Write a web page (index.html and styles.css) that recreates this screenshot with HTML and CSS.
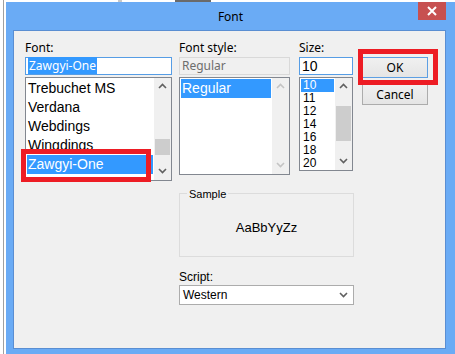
FILE: index.html
```html
<!DOCTYPE html>
<html lang="en">

<head>
    <meta charset="UTF-8">
    <title>Font</title>
    <link rel="stylesheet" href="styles.css">
</head>

<body>
    <div class="desk">
        <div class="desk-edge"></div>

        <div class="window-wrap">
            <div class="desk-top">
                <span class="top-bit light"></span>
                <span class="top-bit dark"></span>
            </div>

            <div class="window">
                <div class="titlebar">
                    <span class="title">Font</span>
                    <button class="close">
                        <svg width="10" height="10" viewBox="0 0 10 10">
                            <path d="M1 1 L9 9 M9 1 L1 9" stroke="#fff" stroke-width="2"/>
                        </svg>
                    </button>
                </div>

                <div class="client">
                    <div class="top-row">
                        <!-- font name -->
                        <div class="col col-font">
                            <div class="lbl">Font:</div>
                            <div class="field focus"><span class="sel-text">Zawgyi-One</span></div>
                            <div class="list list-font">
                                <ul class="items">
                                    <li>Trebuchet MS</li>
                                    <li>Verdana</li>
                                    <li>Webdings</li>
                                    <li>Wingdings</li>
                                    <li class="active">Zawgyi-One</li>
                                </ul>
                                <div class="scroll">
                                    <div class="arrow"><svg width="9" height="6" viewBox="0 0 9 6"><polyline points="1,5 4.5,1.5 8,5" fill="none" stroke="#606060" stroke-width="1.6"/></svg></div>
                                    <div class="track"><div class="thumb thumb-font"></div></div>
                                    <div class="arrow"><svg width="9" height="6" viewBox="0 0 9 6"><polyline points="1,1 4.5,4.5 8,1" fill="none" stroke="#606060" stroke-width="1.6"/></svg></div>
                                </div>
                            </div>
                        </div>

                        <!-- font style -->
                        <div class="col col-style">
                            <div class="lbl">Font style:</div>
                            <div class="field disabled">Regular</div>
                            <div class="list list-style">
                                <ul class="items">
                                    <li class="active">Regular</li>
                                </ul>
                                <div class="scroll">
                                    <div class="arrow"><svg width="9" height="6" viewBox="0 0 9 6"><polyline points="1,5 4.5,1.5 8,5" fill="none" stroke="#c4c4c4" stroke-width="1.6"/></svg></div>
                                    <div class="track"></div>
                                    <div class="arrow"><svg width="9" height="6" viewBox="0 0 9 6"><polyline points="1,1 4.5,4.5 8,1" fill="none" stroke="#c4c4c4" stroke-width="1.6"/></svg></div>
                                </div>
                            </div>
                        </div>

                        <!-- size -->
                        <div class="col col-size">
                            <div class="lbl">Size:</div>
                            <div class="field focus size-field">10</div>
                            <div class="list list-size">
                                <ul class="items">
                                    <li class="active">10</li>
                                    <li>11</li>
                                    <li>12</li>
                                    <li>14</li>
                                    <li>16</li>
                                    <li>18</li>
                                    <li>20</li>
                                </ul>
                                <div class="scroll">
                                    <div class="arrow"><svg width="9" height="6" viewBox="0 0 9 6"><polyline points="1,5 4.5,1.5 8,5" fill="none" stroke="#606060" stroke-width="1.6"/></svg></div>
                                    <div class="track"><div class="thumb thumb-size"></div></div>
                                    <div class="arrow"><svg width="9" height="6" viewBox="0 0 9 6"><polyline points="1,1 4.5,4.5 8,1" fill="none" stroke="#606060" stroke-width="1.6"/></svg></div>
                                </div>
                            </div>
                        </div>

                        <div class="col col-buttons">
                            <button class="btn btn-default">OK</button>
                            <button class="btn">Cancel</button>
                        </div>
                    </div>

                    <div class="lower">
                        <fieldset class="sample">
                            <legend>Sample</legend>
                            <div class="sample-text">AaBbYyZz</div>
                        </fieldset>
                        <div class="lbl-small">Script:</div>
                        <div class="select">
                            <span>Western</span>
                            <svg width="9" height="6" viewBox="0 0 9 6"><polyline points="1,1 4.5,4.5 8,1" fill="none" stroke="#606060" stroke-width="1.6"/></svg>
                        </div>
                    </div>
                </div>
            </div>
        </div>

        <!-- red highlight boxes drawn over the dialog -->
        <div class="mark mark-font"></div>
        <div class="mark mark-ok"></div>
    </div>
</body>

</html>
```

FILE: styles.css
```css
* {
    box-sizing: border-box;
    margin: 0;
    padding: 0;
}

body {
    background: #fff;
    overflow: hidden;
    font-family: "Noto Sans", "Open Sans", sans-serif;
    color: #000;
}

.desk {
    position: relative;
    display: flex;
    width: 455px;
    height: 354px;
}

.desk-edge {
    width: 6px;
    padding-left: 3px;
}

.desk-edge::before {
    content: "";
    display: block;
    width: 1px;
    height: 100%;
    background: #a0a0a0;
}

.window-wrap {
    display: flex;
    flex-direction: column;
}

.desk-top {
    height: 2px;
    display: flex;
}

.top-bit.light {
    width: 4px;
    margin-left: 112px;
    background: #c8c8c8;
}

.top-bit.dark {
    width: 36px;
    margin-left: 53px;
    background: #6a6a6a;
}

.window {
    width: 449px;
    height: 360px;
    background: #6aabf5;
    padding: 0 9px 0 7px;
}

.titlebar {
    height: 28px;
    display: flex;
    justify-content: center;
    align-items: center;
    position: relative;
}

.title {
    font-size: 12px;
    margin-left: 2px;
    margin-top: 1px;
}

.close {
    position: absolute;
    right: 0;
    top: 0;
    width: 28px;
    height: 18px;
    background: #c75050;
    border: none;
    display: flex;
    align-items: center;
    justify-content: center;
}

.client {
    width: 433px;
    height: 319px;
    background: #f0f0f0;
    border: 1px solid #5a8ed2;
    padding: 9px 0 0 11px;
}

.top-row {
    display: flex;
    align-items: flex-start;
}

.col {
    display: flex;
    flex-direction: column;
}

.col-font {
    width: 147px;
}

.col-style {
    width: 111px;
    margin-left: 7px;
}

.col-size {
    width: 54px;
    margin-left: 9px;
}

.col-buttons {
    width: 66px;
    margin-left: 9px;
    padding-top: 17px;
}

.lbl {
    height: 17px;
    font-size: 12px;
    line-height: 15px;
}

.field {
    height: 18px;
    background: #fff;
    border: 1px solid #abadb3;
    font-size: 12px;
    line-height: 16px;
    padding-left: 2px;
}

.field.focus {
    border-color: #569de5;
}

.field.disabled {
    background: #f0f0f0;
    border-color: #d9d9d9;
    color: #6d6d6d;
}

.size-field {
    font-family: "Liberation Sans", Arial, sans-serif;
    font-size: 14px;
}

.sel-text {
    background: #3399ff;
    color: #fff;
    padding: 0 1px;
}

.list {
    display: flex;
    background: #fff;
    border: 1px solid #828790;
    margin-top: 2px;
    font-family: "Liberation Sans", Arial, sans-serif;
}

.list-font {
    height: 104px;
}

.list-style {
    height: 98px;
}

.list-size {
    height: 94px;
}

.items {
    list-style: none;
    flex: 1;
    padding: 1px 1px 0 1px;
    overflow: hidden;
}

.items li {
    white-space: nowrap;
    padding-left: 1px;
}

.list-font .items li,
.list-style .items li {
    height: 19px;
    font-size: 14px;
    line-height: 19px;
}

.list-size .items li {
    height: 13px;
    font-size: 12px;
    line-height: 13px;
    padding-left: 2px;
}

.items li.active {
    background: #3399ff;
    color: #fff;
}

.scroll {
    width: 17px;
    background: #f0f0f0;
    display: flex;
    flex-direction: column;
}

.arrow {
    height: 17px;
    display: flex;
    align-items: center;
    justify-content: center;
}

.track {
    flex: 1;
    padding: 0 1px;
}

.thumb {
    background: #cdcdcd;
}

.thumb-font {
    margin-top: 44px;
    height: 16px;
}

.thumb-size {
    margin-top: 11px;
    height: 35px;
}

.btn {
    width: 66px;
    height: 21px;
    font-family: "Noto Sans", sans-serif;
    font-size: 12px;
    color: #000;
    background: linear-gradient(#f0f0f0, #e5e5e5);
    border: 1px solid #acacac;
}

.btn-default {
    border-color: #5d9fe3;
    margin-bottom: 6px;
}

.lower {
    margin-left: 154px;
    margin-top: 7px;
    width: 175px;
    font-family: "Liberation Sans", Arial, sans-serif;
}

.sample {
    border: 1px solid #dcdcdc;
    padding: 0 0 0 7px;
}

.sample legend {
    font-size: 11px;
    line-height: 12px;
    padding: 0 2px;
}

.sample-text {
    height: 56px;
    margin-left: -7px;
    display: flex;
    align-items: center;
    justify-content: center;
    font-size: 13px;
}

.lbl-small {
    margin-top: 13px;
    font-size: 12px;
    line-height: 14px;
}

.select {
    margin-top: 1px;
    height: 20px;
    background: #fff;
    border: 1px solid #acacac;
    display: flex;
    align-items: center;
    justify-content: space-between;
    padding: 0 5px 0 3px;
    font-size: 12px;
}

.mark {
    position: absolute;
    border: 5px solid #ed1c24;
}

.mark-font {
    left: 21px;
    top: 149px;
    width: 130px;
    height: 33px;
}

.mark-ok {
    left: 358px;
    top: 49px;
    width: 80px;
    height: 36px;
}
```
